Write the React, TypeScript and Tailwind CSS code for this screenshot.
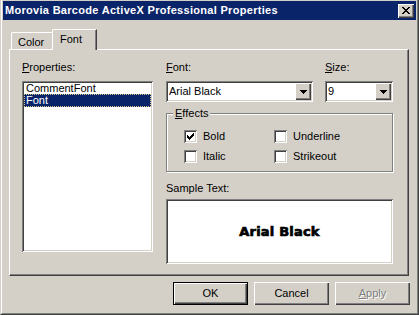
import React from 'react';

const ui = "font-['Liberation_Sans',Arial,sans-serif] text-[11px] leading-[13px] text-black";

const raised = 'shadow-[inset_1px_1px_0_#ffffff,inset_-1px_-1px_0_#404040,inset_-2px_-2px_0_#808080]';
const sunken =
  'shadow-[inset_1px_1px_0_#808080,inset_-1px_-1px_0_#ffffff,inset_2px_2px_0_#404040,inset_-2px_-2px_0_#d4d0c8]';

const CloseGlyph = () => (
  <svg width="8" height="7" viewBox="0 0 8 7" shapeRendering="crispEdges">
    <path d="M0 0h2v1H0zM6 0h2v1H6zM1 1h2v1H1zM5 1h2v1H5zM2 2h4v1H2zM3 3h2v1H3zM2 4h4v1H2zM1 5h2v1H1zM5 5h2v1H5zM0 6h2v1H0zM6 6h2v1H6z" fill="#000" />
  </svg>
);

const DownArrow = () => (
  <svg width="7" height="4" viewBox="0 0 7 4" shapeRendering="crispEdges">
    <path d="M0 0h7v1H0zM1 1h5v1H1zM2 2h3v1H2zM3 3h1v1H3z" fill="#000" />
  </svg>
);

const CheckGlyph = () => (
  <svg width="7" height="7" viewBox="0 0 7 7" shapeRendering="crispEdges">
    <path d="M0 2h1v3H0zM1 3h1v3H1zM2 4h1v3H2zM3 3h1v3H3zM4 2h1v3H4zM5 1h1v3H5zM6 0h1v3H6z" fill="#000" />
  </svg>
);

const Combo: React.FC<{ value: string; width: string }> = ({ value, width }) => (
  <div className={`${width} h-[21px] bg-white ${sunken} flex items-center pl-[3px] pr-[2px]`}>
    <span className="flex-1 truncate">{value}</span>
    <div className={`w-[16px] h-[17px] bg-[#d4d0c8] ${raised} flex items-center justify-center`}>
      <DownArrow />
    </div>
  </div>
);

const Checkbox: React.FC<{ label: string; checked?: boolean }> = ({ label, checked }) => (
  <div className="flex items-center h-[13px] gap-[6px]">
    <div className={`w-[13px] h-[13px] bg-white ${sunken} flex items-center justify-center`}>
      {checked && <CheckGlyph />}
    </div>
    <span>{label}</span>
  </div>
);

const Button: React.FC<{ label: React.ReactNode; isDefault?: boolean; disabled?: boolean }> = ({
  label,
  isDefault,
  disabled
}) => (
  <div
    className={`w-[75px] h-[23px] bg-[#d4d0c8] flex items-center justify-center ${
      isDefault ? 'border border-black' : ''
    }`}
  >
    <div className={`w-full h-full flex items-center justify-center ${raised}`}>
      <span className={disabled ? 'text-[#808080] [text-shadow:1px_1px_0_#ffffff]' : ''}>{label}</span>
    </div>
  </div>
);

export default function App() {
  return (
    <div className={`w-[419px] h-[315px] bg-[#d4d0c8] border-l border-l-[#d4d0c8] border-r border-r-[#404040] border-b border-b-[#404040] ${ui}`}>
      <div className="h-full border-l border-l-white border-r border-r-[#808080] border-b border-b-[#808080] px-[1px] pt-[1px] flex flex-col">
        {/* Title bar */}
        <div className="h-[19px] bg-[#0a246a] flex items-center pl-[2px] pr-[2px]">
          <span className="flex-1 text-white font-bold tracking-[0.3px]">Morovia Barcode ActiveX Professional Properties</span>
          <div className={`w-[16px] h-[14px] bg-[#d4d0c8] ${raised} flex items-center justify-center`}>
            <CloseGlyph />
          </div>
        </div>

        {/* Tabs */}
        <div className="mt-[9px] pl-[8px] h-[20px] flex items-end">
          <div className="w-[43px] h-[17px] border-l border-t border-white rounded-tl-[2px] shadow-[inset_-1px_0_0_#808080] border-r border-r-[#404040] pl-[6px] pt-[3px]">
            Color
          </div>
          <div className="relative z-10 -ml-[2px] -mb-px w-[45px] h-[21px] bg-[#d4d0c8] border-l border-t border-white rounded-tl-[2px] border-r border-r-[#404040] shadow-[inset_-1px_0_0_#808080] pl-[7px] pt-[3px]">
            Font
          </div>
        </div>

        {/* Tab panel */}
        <div className="ml-[6px] mr-[7px] h-[227px] border-l border-t border-white border-r border-r-[#404040] border-b border-b-[#404040] shadow-[inset_-1px_-1px_0_#808080] flex pl-[12px] pt-[11px]">
          {/* Left column */}
          <div className="w-[131px] flex flex-col">
            <div className="h-[13px]">
              <span className="underline">P</span>roperties:
            </div>
            <div className={`mt-[7px] h-[171px] bg-white ${sunken} p-[2px] flex flex-col`}>
              <div className="h-[11px] leading-[11px] pl-[2px]">CommentFont</div>
              <div className="h-[13px] bg-[#0a246a] text-white border border-dotted border-[#d8c890] pl-[1px] leading-[11px]">
                Font
              </div>
            </div>
          </div>

          {/* Right column */}
          <div className="ml-[13px] w-[227px] flex flex-col">
            <div className="flex gap-[12px]">
              <div className="flex flex-col">
                <div className="h-[13px]">
                  <span className="underline">F</span>ont:
                </div>
                <div className="mt-[7px]">
                  <Combo value="Arial Black" width="w-[147px]" />
                </div>
              </div>
              <div className="flex flex-col">
                <div className="h-[13px]">
                  <span className="underline">S</span>ize:
                </div>
                <div className="mt-[7px]">
                  <Combo value="9" width="w-[68px]" />
                </div>
              </div>
            </div>

            {/* Effects group */}
            <div className="relative mt-[11px] h-[59px] border border-[#808080] shadow-[inset_1px_1px_0_#ffffff,1px_1px_0_#ffffff] pl-[17px] pt-[16px]">
              <div className="absolute -top-[7px] left-[6px] bg-[#d4d0c8] px-[2px]">
                <span className="underline">E</span>ffects
              </div>
              <div className="grid grid-cols-[90px_1fr] gap-y-[7px]">
                <Checkbox label="Bold" checked />
                <Checkbox label="Underline" />
                <Checkbox label="Italic" />
                <Checkbox label="Strikeout" />
              </div>
            </div>

            <div className="mt-[10px] h-[13px]">Sample Text:</div>
            <div className={`mt-[4px] h-[65px] bg-white ${sunken} flex items-center justify-center`}>
              <span className="font-['DejaVu_Sans',sans-serif] font-bold text-[13px] tracking-[0.2px] [-webkit-text-stroke:0.7px_#000]">
                Arial Black
              </span>
            </div>
          </div>
        </div>

        {/* Buttons */}
        <div className="mt-[6px] pr-[6px] flex justify-end gap-[6px]">
          <Button label="OK" isDefault />
          <Button label="Cancel" />
          <Button
            label={
              <>
                <span className="underline">A</span>pply
              </>
            }
            disabled
          />
        </div>
      </div>
    </div>
  );
}
